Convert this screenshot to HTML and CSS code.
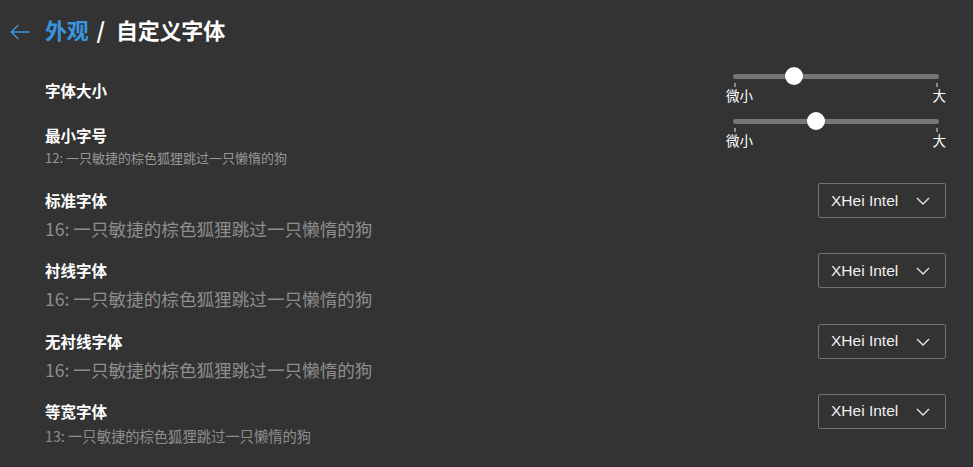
FILE: index.html
```html
<!DOCTYPE html>
<html lang="zh-CN">
<head>
<meta charset="utf-8">
<title>自定义字体</title>
<link rel="stylesheet" href="styles.css">
</head>
<body>
<div class="page">
  <header class="header">
    <svg class="back" width="20" height="16" viewBox="0 0 20 16" aria-hidden="true">
      <path d="M19 8H1.5M8 1.2L1.2 8L8 14.8" fill="none" stroke="#3a95e0" stroke-width="1.4" stroke-linecap="round" stroke-linejoin="round"/>
    </svg>
    <h1 class="title"><span class="crumb">外观</span><span class="sep">/</span>自定义字体</h1>
  </header>

  <section class="row row-slider row-first">
    <div class="text">
      <div class="label">字体大小</div>
    </div>
    <div class="slider">
      <div class="track-wrap"><div class="track"><div class="knob" style="left: 29.6%"></div></div></div>
      <div class="ticks"><span class="tick"></span><span class="tick"></span></div>
      <div class="ends"><span>微小</span><span>大</span></div>
    </div>
  </section>

  <section class="row row-slider row-second">
    <div class="text">
      <div class="label">最小字号</div>
      <div class="sample sample-12">12: 一只敏捷的棕色狐狸跳过一只懒惰的狗</div>
    </div>
    <div class="slider">
      <div class="track-wrap"><div class="track"><div class="knob" style="left: 40.3%"></div></div></div>
      <div class="ticks"><span class="tick"></span><span class="tick"></span></div>
      <div class="ends"><span>微小</span><span>大</span></div>
    </div>
  </section>

  <section class="row row-font">
    <div class="text">
      <div class="label">标准字体</div>
      <div class="sample sample-16">16: 一只敏捷的棕色狐狸跳过一只懒惰的狗</div>
    </div>
    <div class="select"><span>XHei Intel</span><svg class="chev" width="14" height="8" viewBox="0 0 14 8"><path d="M1 1L7 7L13 1" fill="none" stroke="#e8e8e8" stroke-width="1.3"/></svg></div>
  </section>

  <section class="row row-font">
    <div class="text">
      <div class="label">衬线字体</div>
      <div class="sample sample-16">16: 一只敏捷的棕色狐狸跳过一只懒惰的狗</div>
    </div>
    <div class="select"><span>XHei Intel</span><svg class="chev" width="14" height="8" viewBox="0 0 14 8"><path d="M1 1L7 7L13 1" fill="none" stroke="#e8e8e8" stroke-width="1.3"/></svg></div>
  </section>

  <section class="row row-font">
    <div class="text">
      <div class="label">无衬线字体</div>
      <div class="sample sample-16">16: 一只敏捷的棕色狐狸跳过一只懒惰的狗</div>
    </div>
    <div class="select"><span>XHei Intel</span><svg class="chev" width="14" height="8" viewBox="0 0 14 8"><path d="M1 1L7 7L13 1" fill="none" stroke="#e8e8e8" stroke-width="1.3"/></svg></div>
  </section>

  <section class="row row-font">
    <div class="text">
      <div class="label">等宽字体</div>
      <div class="sample sample-13">13: 一只敏捷的棕色狐狸跳过一只懒惰的狗</div>
    </div>
    <div class="select"><span>XHei Intel</span><svg class="chev" width="14" height="8" viewBox="0 0 14 8"><path d="M1 1L7 7L13 1" fill="none" stroke="#e8e8e8" stroke-width="1.3"/></svg></div>
  </section>
</div>
</body>
</html>
```

FILE: styles.css
```css
html, body {
  margin: 0;
  padding: 0;
  background: #333333;
  height: 100%;
}

body {
  font-family: "Noto Sans CJK SC", "Noto Sans", sans-serif;
  color: #ffffff;
  overflow: hidden;
}

.page {
  display: flex;
  flex-direction: column;
  padding: 0 27px 0 45px;
}

.header {
  box-sizing: border-box;
  height: 64px;
  padding-bottom: 7px;
  display: flex;
  align-items: center;
  position: relative;
}

.back {
  position: absolute;
  left: -35px;
  top: 24px;
}

.title {
  margin: 0;
  font-size: 22px;
  font-weight: 700;
  line-height: 30px;
  color: #ffffff;
  letter-spacing: -0.2px;
  white-space: nowrap;
}

.crumb {
  color: #3a95e0;
}

.sep {
  display: inline-block;
  margin: 0 11px 0 8px;
}

.row {
  display: flex;
  justify-content: space-between;
  align-items: flex-start;
}

.text {
  display: flex;
  flex-direction: column;
}

.label {
  font-size: 15.5px;
  font-weight: 700;
  line-height: 20px;
  color: #ffffff;
}

.sample {
  color: #8e8e8e;
  white-space: nowrap;
}

.sample-12 {
  font-size: 13px;
  line-height: 16px;
  margin-top: 5px;
  color: #979797;
}

.sample-16 {
  font-size: 17.6px;
  line-height: 24px;
  margin-top: 7px;
}

.sample-13 {
  font-size: 14.3px;
  line-height: 18px;
  margin-top: 6px;
}

.row-first {
  height: 45px;
}

.row-first .text {
  padding-top: 16px;
}

.row-second {
  height: 74px;
}

.row-second .text {
  padding-top: 16px;
}

.slider {
  width: 220px;
  margin-top: 3px;
}

.track-wrap {
  height: 18px;
  padding: 0 7px;
  display: flex;
  align-items: center;
}

.track {
  flex: 1;
  height: 5px;
  border-radius: 3px;
  background: #767676;
  position: relative;
}

.knob {
  position: absolute;
  top: 50%;
  width: 18px;
  height: 18px;
  border-radius: 50%;
  background: #ffffff;
  transform: translate(-50%, -50%);
}

.ticks {
  display: flex;
  justify-content: space-between;
  padding: 0 8px;
  margin-top: -2px;
  height: 4px;
}

.tick {
  width: 2px;
  height: 4px;
  background: #8a8a8a;
}

.ends {
  display: flex;
  justify-content: space-between;
  font-size: 13.5px;
  line-height: 16px;
  color: #ffffff;
}

.row-font {
  height: 70.3px;
}

.row-font .text {
  padding-top: 7px;
}

.select {
  box-sizing: border-box;
  width: 128px;
  height: 35px;
  border: 1px solid #727272;
  border-radius: 2px;
  display: flex;
  align-items: center;
  justify-content: space-between;
  padding: 0 15px 0 12px;
  font-family: "Liberation Sans", Arial, sans-serif;
  font-size: 15.5px;
  color: #f0f0f0;
}

.chev {
  margin-top: 1px;
}
```
